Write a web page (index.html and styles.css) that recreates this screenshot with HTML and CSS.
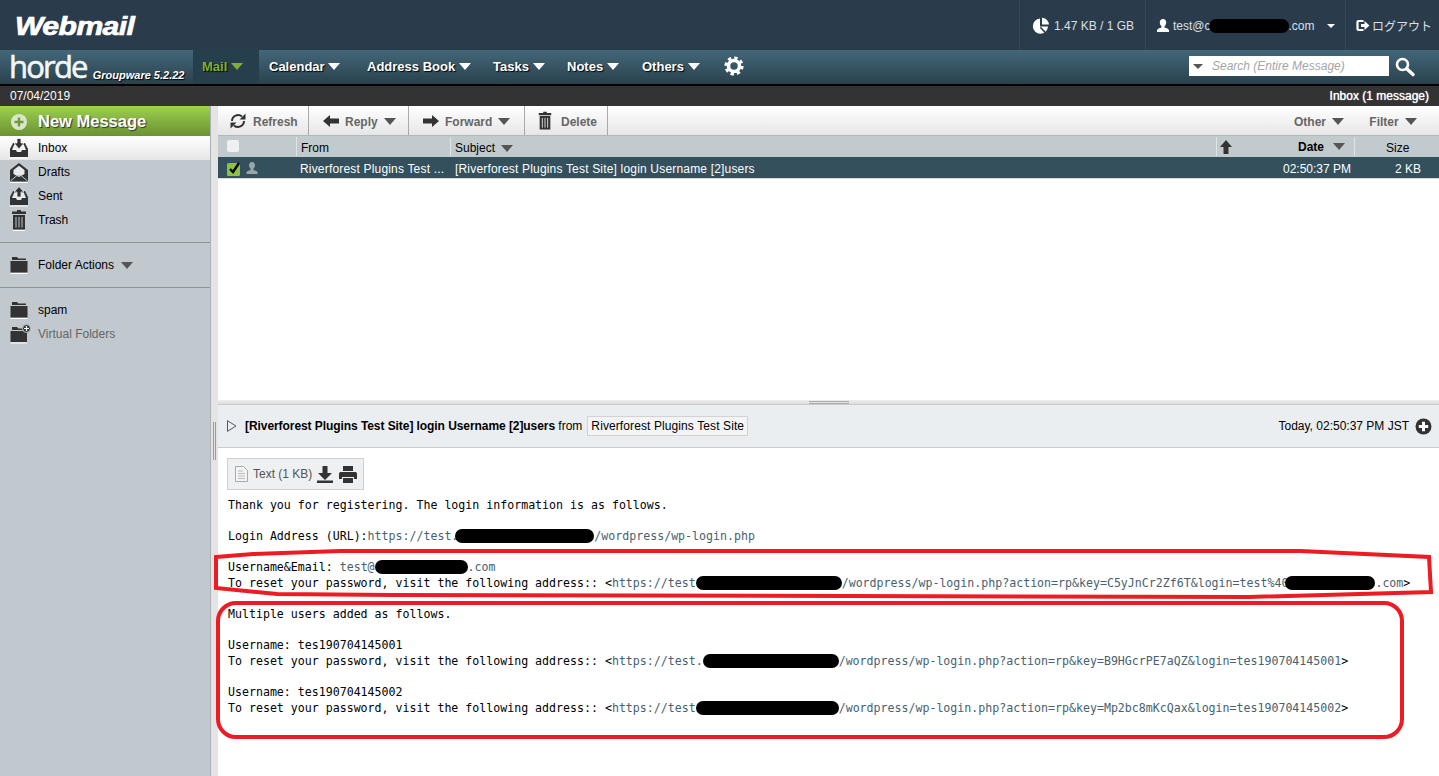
FILE: index.html
```html
<!DOCTYPE html>
<html lang="en">
<head>
  <meta charset="UTF-8" />
  <title>Horde Mail</title>
  <link rel="stylesheet" href="styles.css">
</head>
<body>

  <header class="topbar">
    <div class="webmail-logo">Webmail</div>
    <div class="top-item quota">
      <svg width="18" height="18" viewBox="0 0 18 18"><path fill="#fff" d="M8 1.500a7.600 7.600 0 1 0 8 8H8z"/><path fill="#fff" d="M10 0.800a7.500 7.500 0 0 1 7 6.600h-7z"/><path fill="#2a3b4c" d="M8.600 9.600l5.600 5.600-1.200 1.200-5-5.400z"/></svg>
      <span>1.47 KB / 1 GB</span>
    </div>
    <div class="top-item account">
      <svg width="14" height="14" viewBox="0 0 14 14"><path fill="#fff" d="M7 0c2 0 3.200 1.500 3.200 3.500 0 1.500-.7 3-1.700 3.700v1.300c2 .6 4.500 1.300 4.500 3V13H1v-1.500c0-1.700 2.500-2.400 4.500-3V7.200C4.500 6.500 3.800 5 3.800 3.500 3.800 1.500 5 0 7 0z"/></svg>
      <span class="account-text">test@c<i class="blot blot-account"></i>.com</span>
      <i class="caret caret-white-small"></i>
    </div>
    <div class="top-item logout">
      <svg width="14" height="13" viewBox="0 0 14 13"><path fill="none" stroke="#fff" stroke-width="2.200" d="M7.500 2H2.500a1 1 0 0 0-1 1v7a1 1 0 0 0 1 1h5"/><path fill="#fff" d="M5 5h3.500V2l5 4.500-5 4.500V8H5z"/></svg>
      <span>ログアウト</span>
    </div>
  </header>

  <nav class="navbar">
    <div class="horde-logo"><span class="horde-word">horde</span><span class="horde-version">Groupware 5.2.22</span></div>
    <a class="nav-tab nav-active">Mail <i class="caret caret-green"></i></a>
    <a class="nav-tab nav-calendar">Calendar <i class="caret caret-white"></i></a>
    <a class="nav-tab nav-address">Address Book <i class="caret caret-white"></i></a>
    <a class="nav-tab nav-tasks">Tasks <i class="caret caret-white"></i></a>
    <a class="nav-tab nav-notes">Notes <i class="caret caret-white"></i></a>
    <a class="nav-tab nav-others">Others <i class="caret caret-white"></i></a>
    <svg class="gear" width="20" height="20" viewBox="0 0 20 20"><circle cx="10" cy="10" r="5.500" fill="none" stroke="#fff" stroke-width="3.500"/><circle cx="10" cy="10" r="8" fill="none" stroke="#fff" stroke-width="3.200" stroke-dasharray="3.300 2.980"/></svg>
    <div class="search">
      <div class="search-box"><i class="caret caret-grey-small"></i><span>Search (Entire Message)</span></div>
      <svg width="22" height="22" viewBox="0 0 22 22"><circle cx="8.500" cy="8.500" r="5.500" fill="none" stroke="#fff" stroke-width="2.600"/><path stroke="#fff" stroke-width="3.400" stroke-linecap="round" d="M13 13l6 5.500"/></svg>
    </div>
  </nav>

  <div class="statusbar">
    <span>07/04/2019</span>
    <span class="status-count">Inbox (1 message)</span>
  </div>

  <main class="main">
    <aside class="sidebar">
      <div class="new-message">
        <svg width="18" height="18" viewBox="0 0 18 18"><circle cx="9" cy="9" r="8" fill="#d9e6cc"/><path stroke="#6f9a3a" stroke-width="2.400" d="M9 4.500v9M4.500 9h9"/></svg>
        <span>New Message</span>
      </div>
      <ul class="folders">
        <li class="folder folder-active">
          <svg class="f-icon" width="18" height="21" viewBox="0 0 18 21"><path fill="#333" d="M3 5h12l3 6v8H0v-8z"/><path fill="#f2f2f2" d="M4.200 6.500h9.600L16 12h-4l-1 2H7l-1-2H2z"/><path fill="#333" stroke="#f2f2f2" stroke-width=".8" d="M7 .5h4V5h3l-5 6-5-6h3z"/><path fill="#fff" d="M0 19.500h18v1H0z"/></svg>
          Inbox
        </li>
        <li class="folder">
          <svg class="f-icon" width="18" height="21" viewBox="0 0 18 21"><path fill="#333" d="M9 1l9 7v11.500H0V8z"/><path fill="#e6eaed" d="M3.500 8L9 3.800 14.500 8v4L9 15l-5.500-3z"/><path fill="none" stroke="#c1c9cf" d="M.5 19L7 13.500h4l6.500 5.500"/><path fill="#fff" d="M0 20h18v1H0z"/></svg>
          Drafts
        </li>
        <li class="folder">
          <svg class="f-icon" width="18" height="21" viewBox="0 0 18 21"><path fill="#333" d="M3 5h12l3 6v8H0v-8z"/><path fill="#e6eaed" d="M4.200 6.500h9.600L16 12h-4l-1 2H7l-1-2H2z"/><path fill="#333" stroke="#e6eaed" stroke-width=".8" d="M7 11V6H4l5-5.500L14 6h-3v5z"/><path fill="#fff" d="M0 19.500h18v1H0z"/></svg>
          Sent
        </li>
        <li class="folder">
          <svg class="f-icon" width="18" height="21" viewBox="0 0 18 21"><path fill="#333" d="M7 0h4v1.500h5V4H2V1.500h5zM3 5h12v14.500H3z"/><path stroke="#c1c9cf" d="M6 7v10.500M9 7v10.500M12 7v10.500"/><path fill="#fff" d="M3 20h12v1H3z"/></svg>
          Trash
        </li>
      </ul>
      <div class="folder folder-actions">
        <svg class="f-icon" width="18" height="18" viewBox="0 0 18 18"><path fill="#333" d="M2 1h5l1.500 1.500H16V4H2zM.5 5h17v11.500H.5z"/><path fill="#fff" d="M.5 17h17v1H.5z"/></svg>
        Folder Actions <i class="caret caret-grey"></i>
      </div>
      <div class="folder folder-spam">
        <svg class="f-icon" width="18" height="18" viewBox="0 0 18 18"><path fill="#333" d="M2 1h5l1.500 1.500H16V4H2zM.5 5h17v11.500H.5z"/><path fill="#fff" d="M.5 17h17v1H.5z"/></svg>
        spam
      </div>
      <div class="folder folder-virtual">
        <svg class="f-icon" width="21" height="20" viewBox="0 0 21 20"><path fill="#333" d="M2 3h5l1.500 1.500H13V6H2zM.5 7h16.500v11H.5z"/><circle cx="16.500" cy="4.500" r="4" fill="#333" stroke="#c1c9cf"/><path stroke="#fff" stroke-width="1.200" d="M16.500 2v5M14 4.500h5"/><path fill="#fff" d="M.5 18.500h16.500v1H.5z"/></svg>
        Virtual Folders
      </div>
    </aside>

    <div class="gutter"><i class="gutter-grip"></i></div>

    <section class="content">
      <div class="toolbar">
        <a class="tool tool-refresh">
          <svg width="18" height="18" viewBox="0 0 18 18"><path fill="none" stroke="#333" stroke-width="2" d="M3 9a6 6 0 0 1 10-4.400M15 9a6 6 0 0 1-10 4.400"/><path fill="#333" d="M16.500 1.500v6h-6zM1.500 16.500v-6h6z"/></svg>
          Refresh
        </a>
        <a class="tool tool-reply">
          <svg width="16" height="12" viewBox="0 0 16 12"><path fill="#333" d="M0 6l7-6v3.500h9v5H7V12z"/></svg>
          Reply <i class="caret caret-grey"></i>
        </a>
        <a class="tool tool-forward">
          <svg width="16" height="12" viewBox="0 0 16 12"><path fill="#333" d="M16 6L9 0v3.500H0v5h9V12z"/></svg>
          Forward <i class="caret caret-grey"></i>
        </a>
        <a class="tool tool-delete">
          <svg width="16" height="20" viewBox="0 0 18 21"><path fill="#333" d="M7 0h4v1.500h5V4H2V1.500h5zM3 5h12v15H3z"/><path stroke="#e8e8e8" d="M6 7v11M9 7v11M12 7v11"/></svg>
          Delete
        </a>
        <a class="tool-plain tool-other">Other <i class="caret caret-grey"></i></a>
        <a class="tool-plain tool-filter">Filter <i class="caret caret-grey"></i></a>
      </div>

      <div class="msg-grid msg-head">
        <div class="cell cell-check"><i class="check-empty"></i></div>
        <div class="cell">From</div>
        <div class="cell">Subject <i class="caret caret-grey"></i></div>
        <div class="cell cell-date">
          <svg width="12" height="14" viewBox="0 0 12 14"><path fill="#333" d="M6 0l6 7H8.500v7h-5V7H0z"/></svg>
          <b>Date</b> <i class="caret caret-grey"></i>
        </div>
        <div class="cell cell-size">Size</div>
      </div>
      <div class="msg-grid msg-row">
        <div class="cell-icons">
          <svg width="14" height="14" viewBox="0 0 14 14"><rect y="1" width="13" height="13" rx="1.500" fill="#8dc048"/><path fill="none" stroke="#000" stroke-width="2.400" d="M3 7l3 3 6-9"/></svg>
          <svg width="14" height="13" viewBox="0 0 14 14"><path fill="#9aa5aa" d="M7 0c2 0 3.200 1.500 3.200 3.500 0 1.500-.7 3-1.700 3.700v1.300c2 .6 4.500 1.300 4.500 3V13H1v-1.500c0-1.700 2.500-2.400 4.500-3V7.200C4.500 6.500 3.800 5 3.800 3.500 3.800 1.500 5 0 7 0z"/></svg>
        </div>
        <div class="row-from">Riverforest Plugins Test ...</div>
        <div class="row-subject">[Riverforest Plugins Test Site] login Username [2]users</div>
        <div class="row-time">02:50:37 PM</div>
        <div class="row-size">2 KB</div>
      </div>
      <div class="msg-empty"></div>

      <div class="splitter"><i class="splitter-grip"></i></div>

      <div class="preview-head">
        <svg width="10" height="12" viewBox="0 0 10 12"><path fill="none" stroke="#555" d="M.5.700L9 6 .5 11.300z"/></svg>
        <span class="preview-title"><b>[Riverforest Plugins Test Site] login Username [2]users</b> from</span>
        <span class="sender">Riverforest Plugins Test Site</span>
        <span class="preview-date">Today, 02:50:37 PM JST</span>
        <svg width="17" height="17" viewBox="0 0 17 17"><circle cx="8.500" cy="8.500" r="8" fill="#333"/><path stroke="#fff" stroke-width="3" d="M8.500 3.800v9.400M3.800 8.500h9.400"/></svg>
      </div>

      <div class="preview-body">
        <div class="attachment">
          <svg width="13" height="16" viewBox="0 0 13 16"><path fill="#f4f4f4" stroke="#aaa" d="M.5.500h8l4 4v11H.5z"/><path stroke="#bbb" d="M3 5h5M3 7.500h7M3 10h7M3 12.500h7"/></svg>
          <span class="attachment-name">Text (1 KB)</span>
          <svg class="attachment-save" width="16" height="17" viewBox="0 0 16 17"><path fill="#333" d="M5.500 0h5v7H15l-7 7-7-7h4.500zM0 14.500h16V17H0z"/></svg>
          <svg width="18" height="17" viewBox="0 0 18 17"><path fill="#333" d="M4 0h10v5H4zM1.500 6h15A1.500 1.500 0 0 1 18 7.500V13h-3v-2H3v2H0V7.500A1.500 1.500 0 0 1 1.500 6zM4 12h10v5H4z"/></svg>
        </div>
<pre class="mail-text">Thank you for registering. The login information is as follows.

Login Address (URL):<a class="mail-link">https://test.<i class="blot blot-login"></i>/wordpress/wp-login.php</a>

Username&amp;Email: <a class="mail-link">test@<i class="blot blot-email"></i>.com</a>
To reset your password, visit the following address:: &lt;<a class="mail-link">https://test<i class="blot blot-reset1"></i>/wordpress/wp-login.php?action=rp&amp;key=C5yJnCr2Zf6T&amp;login=test%40<i class="blot blot-reset1b"></i>.com</a>&gt;

Multiple users added as follows.

Username: tes190704145001
To reset your password, visit the following address:: &lt;<a class="mail-link">https://test.<i class="blot blot-reset2"></i>/wordpress/wp-login.php?action=rp&amp;key=B9HGcrPE7aQZ&amp;login=tes190704145001</a>&gt;

Username: tes190704145002
To reset your password, visit the following address:: &lt;<a class="mail-link">https://test<i class="blot blot-reset3"></i>/wordpress/wp-login.php?action=rp&amp;key=Mp2bc8mKcQax&amp;login=tes190704145002</a>&gt;</pre>
      </div>
    </section>
  </main>

  <svg class="markup" width="1439" height="776" viewBox="0 0 1439 776">
    <path d="M216 557L253 554L340 551L1300 551L1429 557L1431 592L1249 597L392 595L277 594L216 588Z"/>
    <rect x="218" y="603" width="1184" height="134" rx="18"/>
  </svg>

</body>
</html>
```

FILE: styles.css
```css
* {
  box-sizing: border-box;
}
html, body {
  height: 100%;
  overflow: hidden;
}
body {
  margin: 0;
  position: relative;
  display: flex;
  flex-direction: column;
  font-family: "Liberation Sans", Arial, sans-serif;
  font-size: 12px;
  color: #000;
  background: #fff;
}
svg {
  flex: none;
  display: block;
}

/* carets */
.caret {
  display: inline-block;
  width: 0;
  height: 0;
  border-style: solid;
  border-color: transparent;
  border-width: 7px 6px 0;
  vertical-align: 1px;
}
.caret-white { border-top-color: #fff; }
.caret-green { border-top-color: #7fae34; }
.caret-grey { border-top-color: #555; }
.caret-white-small { border-width: 4px 4px 0; border-top-color: #fff; }
.caret-grey-small { border-width: 5px 5px 0; border-top-color: #555; }

/* black scribbles over private text */
.blot {
  display: inline-block;
  height: 14px;
  border-radius: 7px;
  background: #000;
  vertical-align: -3px;
}
.blot-account { width: 80px; margin-left: -2px; }
.blot-login { width: 139px; margin-left: -3px; }
.blot-email { width: 93px; }
.blot-reset1 { width: 146px; }
.blot-reset1b { width: 90px; margin-left: -3px; }
.blot-reset2 { width: 136px; }
.blot-reset3 { width: 143px; }

/* top bar */
.topbar {
  flex: none;
  height: 50px;
  display: flex;
  align-items: stretch;
  background: #2a3b4c;
  color: #d9e0e6;
}
.webmail-logo {
  margin: 11px auto 0 15px;
  font-size: 26px;
  font-weight: bold;
  font-style: italic;
  color: #fff;
  letter-spacing: -0.5px;
  -webkit-text-stroke: 0.7px #fff;
  transform: scaleX(1.16);
  transform-origin: left;
}
.top-item {
  display: flex;
  align-items: center;
  padding-top: 1px;
  border-left: 1px solid #36475a;
}
.quota { width: 126px; padding-left: 12px; gap: 4px; }
.account { width: 200px; padding-left: 10px; gap: 3px; }
.account-text { width: 151px; }
.logout { width: 94px; padding-left: 10px; gap: 2px; font-family: "Liberation Sans", "Noto Sans CJK JP", sans-serif; }

/* horde bar */
.navbar {
  flex: none;
  height: 36px;
  display: flex;
  background: linear-gradient(#436779, #2a414d);
  border-bottom: 2px solid #000;
}
.horde-logo {
  width: 193px;
  display: flex;
  align-items: flex-end;
  padding-left: 9px;
  color: #fff;
}
.horde-word {
  font-family: "Open Sans", sans-serif;
  font-size: 31px;
  line-height: 36px;
  letter-spacing: -1.800px;
  color: #f4f6f7;
  -webkit-text-stroke: 0.6px #f4f6f7;
}
.horde-version {
  margin: 0 0 3px 6px;
  font-size: 11px;
  font-weight: bold;
  font-style: italic;
  white-space: nowrap;
  text-shadow: 1px 1px 1px #000;
}
.nav-tab {
  display: block;
  padding: 1px 0 0 10px;
  font-size: 13px;
  font-weight: bold;
  line-height: 32px;
  color: #fff;
  white-space: nowrap;
  text-shadow: 1px 1px 1px #000;
}
.nav-active {
  width: 66px;
  padding-left: 9px;
  color: #7fae34;
  background: #25404c;
}
.nav-calendar { width: 98px; }
.nav-address { width: 126px; }
.nav-tasks { width: 74px; }
.nav-notes { width: 75px; }
.nav-others { width: 80px; }
.gear {
  margin: 6px 0 0 12px;
}
.search {
  margin-left: auto;
  padding: 6px 23px 0 0;
  display: flex;
  gap: 5px;
}
.search-box {
  width: 200px;
  height: 20px;
  display: flex;
  align-items: center;
  gap: 9px;
  padding-left: 4px;
  background: #fff;
  font-style: italic;
  color: #a5a5a5;
}

/* status bar */
.statusbar {
  flex: none;
  height: 20px;
  display: flex;
  justify-content: space-between;
  align-items: center;
  padding: 0 10px;
  background: #333;
  color: #fff;
}
.status-count {
  text-shadow: 0 0 1px #fff;
}

/* page body */
.main {
  flex: 1;
  min-height: 0;
  display: flex;
}
.sidebar {
  width: 211px;
  flex: none;
  background: #c1c9cf;
  border-right: 1px solid #aab2b7;
}
.new-message {
  height: 30px;
  display: flex;
  align-items: center;
  gap: 10px;
  padding: 1px 0 0 10px;
  background: linear-gradient(#9dd14e, #6a9233);
  font-size: 16.500px;
  font-weight: bold;
  color: #fff;
  text-shadow: 1px 1px 1px #333;
}
.folders {
  margin: 0;
  padding: 0 0 10px;
  list-style: none;
  border-bottom: 1px solid #8d9598;
}
.folder {
  height: 24px;
  display: flex;
  align-items: center;
  gap: 10px;
  padding-left: 10px;
}
.folder .caret {
  margin-left: -3px;
  vertical-align: 0;
}
.f-icon {
  width: 18px;
}
.folder-active {
  background: linear-gradient(#fff, #e6e6e6);
}
.folder-actions {
  margin-top: 10px;
}
.folder-spam {
  margin-top: 10px;
  border-top: 1px solid #8d9598;
  height: 35px;
  padding-top: 10px;
}
.folder-virtual {
  color: #666;
}
.folder-virtual .f-icon {
  width: 21px;
  margin-right: -3px;
}
.gutter {
  width: 7px;
  flex: none;
  background: #e4e4e4;
  padding: 316px 0 0 2px;
}
.gutter-grip {
  display: block;
  width: 3px;
  height: 38px;
  border-left: 1px solid #9a9a9a;
  border-right: 1px solid #9a9a9a;
}

/* message list */
.content {
  flex: 1;
  min-width: 0;
  display: flex;
  flex-direction: column;
}
.toolbar {
  flex: none;
  height: 30px;
  display: flex;
  background: linear-gradient(#fff, #e6e6e6);
  border-bottom: 1px solid #b0b8bc;
  font-weight: bold;
  color: #666;
}
.tool {
  display: flex;
  align-items: center;
  gap: 5px;
  padding-top: 2px;
  border-right: 1px solid #a9a9a9;
}
.tool svg {
  margin-top: -2px;
}
.tool-refresh { width: 91px; padding-left: 11px; gap: 6px; }
.tool-reply { width: 100px; padding-left: 14px; gap: 6px; }
.tool-forward { width: 116px; padding-left: 14px; gap: 6px; }
.tool-delete { width: 83px; padding-left: 12px; gap: 8px; }
.tool-plain {
  line-height: 32px;
}
.tool-other { margin-left: auto; }
.tool-filter { margin: 0 22px 0 25px; }
.tool-plain .caret { margin-left: 3px; }

.msg-grid {
  flex: none;
  height: 21px;
  display: grid;
  grid-template-columns: 78px 154px 1fr 138px 85px;
  align-items: center;
}
.msg-head {
  background: #c1cbcd;
}
.cell {
  height: 19px;
  line-height: 22px;
  padding-left: 4px;
  border-left: 1px solid #dfe5e6;
  white-space: nowrap;
}
.cell .caret {
  margin-left: 3px;
  vertical-align: 0;
}
.cell-check {
  border-left: none;
  padding: 3px 0 0 9px;
}
.check-empty {
  display: block;
  width: 12px;
  height: 12px;
  border-radius: 2px;
  background: #eef0f1;
}
.cell-date {
  display: flex;
  align-items: center;
  padding: 0 0 0 3px;
}
.cell-date b {
  margin-left: 66px;
}
.cell-date .caret {
  margin-left: 9px;
}
.cell-size {
  padding-left: 31px;
}
.msg-row {
  height: 22px;
  padding-top: 2px;
  background: #34505d;
  border-bottom: 1px solid #d8d8d8;
  color: #fff;
}
.cell-icons {
  display: flex;
  gap: 4px;
  padding-left: 9px;
}
.row-from, .row-subject {
  padding-left: 4px;
  letter-spacing: 0.18px;
  white-space: nowrap;
}
.row-subject {
  padding-left: 5px;
}
.row-time {
  text-align: right;
  padding-right: 3px;
}
.row-size {
  text-align: right;
  padding-right: 18px;
}
.msg-empty {
  flex: none;
  height: 221px;
}

/* preview pane */
.splitter {
  flex: none;
  height: 5px;
  background: linear-gradient(#eee, #ddd);
  border-bottom: 1px solid #ccc;
  padding-top: 1px;
}
.splitter-grip {
  display: block;
  width: 40px;
  height: 3px;
  margin: 0 auto;
  border-top: 1px solid #aaa;
  border-bottom: 1px solid #aaa;
}
.preview-head {
  flex: none;
  height: 43px;
  display: flex;
  align-items: center;
  padding: 0 7px 0 9px;
  background: #ebeef0;
  border-bottom: 1px solid #ccc;
}
.preview-title {
  margin-left: 8px;
}
.preview-title b {
  letter-spacing: -0.07px;
}
.sender {
  margin-left: 5px;
  padding: 2px 3px;
  background: #f3f4f5;
  border: 1px solid #d2d2d2;
  letter-spacing: 0.1px;
}
.preview-date {
  margin: 0 6px 0 auto;
}
.preview-body {
  flex: 1;
  min-height: 0;
  padding: 10px 0 0 9px;
}
.attachment {
  width: 137px;
  height: 32px;
  display: flex;
  align-items: center;
  padding-left: 7px;
  background: #eef0f1;
  border: 1px solid #cfcfcf;
  color: #555;
}
.attachment-name {
  margin: 0 5px;
}
.attachment-save {
  margin-right: 6px;
}
.mail-text {
  margin: 8px 0 0 1px;
  font-family: "DejaVu Sans Mono", monospace;
  font-size: 11.600px;
  line-height: 15.600px;
}
.mail-link {
  color: #47616f;
}

/* hand drawn red outlines on top of the screenshot */
.markup {
  position: absolute;
  left: 0;
  top: 0;
  pointer-events: none;
}
.markup path, .markup rect {
  fill: none;
  stroke: #ed1c24;
  stroke-width: 4;
}
```
